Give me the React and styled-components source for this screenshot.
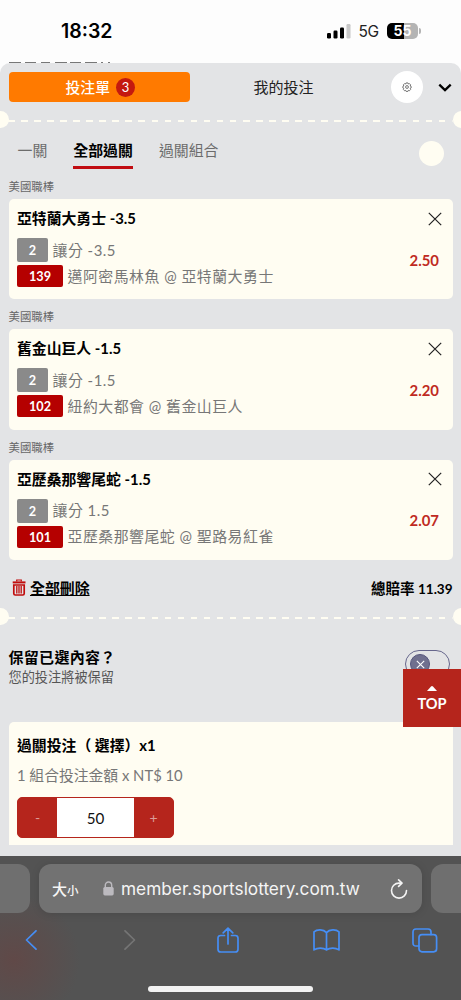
import React from 'react';
import styled, { createGlobalStyle } from 'styled-components';

const bets = [
    { id: 1, league: '美國職棒', pick: '亞特蘭大勇士 -3.5', handicap: '讓分 -3.5', code: '139', match: '邁阿密馬林魚 @ 亞特蘭大勇士', odds: '2.50' },
    { id: 2, league: '美國職棒', pick: '舊金山巨人 -1.5', handicap: '讓分 -1.5', code: '102', match: '紐約大都會 @ 舊金山巨人', odds: '2.20' },
    { id: 3, league: '美國職棒', pick: '亞歷桑那響尾蛇 -1.5', handicap: '讓分 1.5', code: '101', match: '亞歷桑那響尾蛇 @ 聖路易紅雀', odds: '2.07' },
];

const SignalIcon = () => (
    <svg width='24' height='15' viewBox='0 0 24 15'>
        <rect x='0' y='9' width='4' height='5.5' rx='1.2' fill='#000' />
        <rect x='6.5' y='6.5' width='4' height='8' rx='1.2' fill='#000' />
        <rect x='13' y='3.5' width='4' height='11' rx='1.2' fill='#000' />
        <rect x='19.5' y='0' width='4' height='14.5' rx='1.2' fill='#c8c8c8' />
    </svg>
);

const GearIcon = () => (
    <svg width='10' height='10' viewBox='0 0 24 24' fill='none' stroke='#444' strokeWidth='1.7' strokeLinejoin='round'>
        <path d='M9.8 2.2h4.4l1 2.6 2.6-1 3 3.2-1.2 2.6 2.4 1v3.6l-2.4 1 1.2 2.6-3 3.2-2.6-1-1 2.6H9.8l-1-2.6-2.6 1-3-3.2 1.2-2.6-2.4-1v-3.6l2.4-1L3.2 7l3-3.2 2.6 1z' />
        <circle cx='12' cy='12' r='3.4' />
    </svg>
);

const ChevronDownIcon = () => (
    <svg width='14' height='10' viewBox='0 0 14 10' fill='none' stroke='#000' strokeWidth='2.3'>
        <path d='M1.3 2.6L7 8.1l5.7-5.5' />
    </svg>
);

const CloseIcon = () => (
    <svg width='14' height='14' viewBox='0 0 14 14' fill='none' stroke='#222' strokeWidth='1.2'>
        <path d='M.8.8l12.4 12.4M13.2.8L.8 13.2' />
    </svg>
);

const TrashIcon = () => (
    <svg width='14' height='17' viewBox='0 0 14 17' fill='none' stroke='#c00d0d'>
        <path d='M4.7 2.6V1h4.6v1.6' strokeWidth='1.2' />
        <path d='M.7 3.4h12.8' strokeWidth='2' />
        <path d='M1.8 6v8.6q0 1.4 1.4 1.4h7.6q1.4 0 1.4-1.4V6z' strokeWidth='1.7' />
        <path d='M4.8 7v7.4M7 7v7.4M9.2 7v7.4' strokeWidth='1.3' />
    </svg>
);

const LockIcon = () => (
    <svg width='11' height='15' viewBox='0 0 11 15'>
        <path d='M2.3 7V4.2a3.2 3.2 0 0 1 6.4 0V7' fill='none' stroke='#bcbabf' strokeWidth='1.4' />
        <rect x='.3' y='6' width='10.4' height='8.4' rx='1.6' fill='#bcbabf' />
    </svg>
);

const ReloadIcon = () => (
    <svg width='18' height='20' viewBox='0 0 18 20' fill='none' stroke='#f4f4f4' strokeWidth='1.6' strokeLinecap='round' strokeLinejoin='round'>
        <path d='M11.4 4.1H9A7.5 7.5 0 1 0 16.5 11.6' />
        <path d='M8.6.9l3.4 3.2-3.4 3.3' />
    </svg>
);

const App = () => {
    return (
        <>
            <GlobalStyle />
            <Screen>
                <StatusBar>
                    <Time>18:32</Time>
                    <StatusRight>
                        <SignalIcon />
                        <Network>5G</Network>
                        <Battery>55</Battery>
                    </StatusRight>
                </StatusBar>
                <PageBehind>
                    <svg width='104' height='1' viewBox='0 0 104 1' stroke='#777' strokeWidth='1'>
                        <path d='M0 .5h12M16 .5h11M32 .5h9M46 .5h12M61 .5h11M76 .5h12M92 .5h2M99 .5h2' />
                    </svg>
                </PageBehind>
                <Slip>
                    <SlipHeader>
                        <SlipTab>
                            <TabLabel>投注單</TabLabel>
                            <Count>3</Count>
                        </SlipTab>
                        <MyBets>我的投注</MyBets>
                        <SettingButton>
                            <GearIcon />
                        </SettingButton>
                        <ChevronDownIcon />
                    </SlipHeader>
                    <TicketDivider />
                    <ModeTabs>
                        <ModeTab>一關</ModeTab>
                        <ModeTab $active>全部過關</ModeTab>
                        <ModeTab>過關組合</ModeTab>
                        <RoundButton />
                    </ModeTabs>
                    <BetList>
                        {bets.map((bet) => (
                            <BetGroup key={bet.id}>
                                <League>{bet.league}</League>
                                <BetCard>
                                    <BetInfo>
                                        <CardTitle>{bet.pick}</CardTitle>
                                        <BetRow $height={24}>
                                            <Tag $width={31} $color='#8a8a8a'>2</Tag>
                                            <BetText>{bet.handicap}</BetText>
                                        </BetRow>
                                        <BetRow $height={22}>
                                            <Tag $width={46} $color='#b50000'>{bet.code}</Tag>
                                            <BetText>{bet.match}</BetText>
                                        </BetRow>
                                    </BetInfo>
                                    <BetSide>
                                        <CloseIcon />
                                        <Odds>{bet.odds}</Odds>
                                    </BetSide>
                                </BetCard>
                            </BetGroup>
                        ))}
                    </BetList>
                    <Summary>
                        <TrashIcon />
                        <ClearAll>全部刪除</ClearAll>
                        <TotalOdds>
                            總賠率 <span>11.39</span>
                        </TotalOdds>
                    </Summary>
                    <TicketDivider />
                    <KeepSection>
                        <div>
                            <KeepTitle>保留已選內容？</KeepTitle>
                            <KeepText>您的投注將被保留</KeepText>
                        </div>
                        <Toggle>
                            <Knob>
                                <svg width='9' height='9' viewBox='0 0 9 9' stroke='#fff' strokeWidth='1.1'>
                                    <path d='M.8.8l7.4 7.4M8.2.8L.8 8.2' />
                                </svg>
                            </Knob>
                        </Toggle>
                    </KeepSection>
                    <StakeCard>
                        <CardTitle>
                            過關投注<Paren>（</Paren> 選擇<Paren>）</Paren>x1
                        </CardTitle>
                        <StakeText>1 組合投注金額 x NT$ 10</StakeText>
                        <Stepper>
                            <StepButton>-</StepButton>
                            <StepValue>50</StepValue>
                            <StepButton>+</StepButton>
                        </Stepper>
                    </StakeCard>
                    <TopButton>
                        <svg width='10' height='5' viewBox='0 0 10 5' fill='#fff'>
                            <path d='M0 5L4 .5Q5-.4 6 .5L10 5z' />
                        </svg>
                        TOP
                    </TopButton>
                </Slip>
                <Browser>
                    <AddressRow>
                        <SidePill $radius='0 12px 12px 0' />
                        <AddressBar>
                            <TextSize>
                                大<small>小</small>
                            </TextSize>
                            <LockIcon />
                            <Url>member.sportslottery.com.tw</Url>
                            <ReloadIcon />
                        </AddressBar>
                        <SidePill $radius='12px 0 0 12px' />
                    </AddressRow>
                    <Toolbar>
                        <svg width='12' height='20' viewBox='0 0 12 20' stroke='#468ef5'>
                            <path d='M11 .8L1.5 10l9.5 9.2' />
                        </svg>
                        <svg width='12' height='20' viewBox='0 0 12 20' stroke='#757575'>
                            <path d='M1 .8L10.5 10 1 19.2' />
                        </svg>
                        <svg width='22' height='26' viewBox='0 0 22 26' stroke='#468ef5'>
                            <path d='M7.5 8.5H3.8Q1 8.5 1 11.3v10.9Q1 25 3.8 25h14.4q2.8 0 2.8-2.8V11.3q0-2.8-2.8-2.8h-3.7M11 17V1.4M6.2 5.8L11 1.1l4.8 4.7' />
                        </svg>
                        <svg width='27' height='22' viewBox='0 0 27 22' stroke='#468ef5'>
                            <path d='M13.5 3.6C10.5.2 4 .2 1 2.8v18.1c3.3-2.4 9.3-2.4 12.5 0 3.2-2.4 9.2-2.4 12.5 0V2.8C23 .2 16.5.2 13.5 3.6zM13.5 3.6v17.3' />
                        </svg>
                        <svg width='26' height='25' viewBox='0 0 26 25' stroke='#468ef5'>
                            <path d='M6.8 18H4q-3 0-3-3V4q0-3 3-3h12q3 0 3 3v2.4' />
                            <rect x='7' y='6.6' width='17.6' height='17.2' rx='3' />
                        </svg>
                    </Toolbar>
                    <HomeIndicator />
                </Browser>
            </Screen>
        </>
    );
};

const GlobalStyle = createGlobalStyle`
    * {
        box-sizing: border-box;
    }
    body {
        margin: 0;
        background-color: #fdfdfd;
        font-family: Lato, 'Noto Sans CJK TC', sans-serif;
    }
    svg {
        display: block;
        flex-shrink: 0;
    }
`;

const Screen = styled.div`
    display: flex;
    flex-direction: column;
    width: 461px;
    height: 1000px;
    overflow: hidden;
    background-color: #fdfdfd;
`;

const StatusBar = styled.div`
    display: flex;
    justify-content: space-between;
    height: 62px;
    padding: 19px 43px 19px 61px;
    font-family: Inter, sans-serif;
`;

const Time = styled.div`
    font-size: 19.5px;
    font-weight: 600;
    line-height: 25px;
`;

const StatusRight = styled.div`
    display: flex;
    align-items: center;
    height: 24px;
`;

const Network = styled.div`
    width: 21px;
    margin: 1px 7.5px 0 8px;
    color: #222;
    font-size: 15.5px;
    letter-spacing: -0.3px;
`;

const Battery = styled.div`
    position: relative;
    width: 31px;
    height: 16px;
    border-radius: 5px;
    background: linear-gradient(to right, #000 17px, #b4b4b4 17px);
    color: #fff;
    font-size: 14px;
    font-weight: 700;
    line-height: 16px;
    text-align: center;
    &::after {
        content: '';
        position: absolute;
        top: 5px;
        right: -3px;
        width: 2px;
        height: 6px;
        border-radius: 0 2px 2px 0;
        background-color: #b4b4b4;
    }
`;

const PageBehind = styled.div`
    height: 1px;
    padding-left: 9px;
`;

const Slip = styled.div`
    position: relative;
    height: 793px;
    flex-shrink: 0;
    overflow: hidden;
    border-radius: 10px 10px 0 0;
    background-color: #e3e4e6;
`;

const SlipHeader = styled.div`
    display: flex;
    align-items: center;
    height: 48px;
    padding: 0 9.5px 0 8.5px;
`;

const SlipTab = styled.div`
    display: flex;
    align-items: center;
    justify-content: center;
    gap: 6px;
    width: 181.5px;
    height: 30px;
    padding-left: 2px;
    border-radius: 4px;
    background-color: #ff7a00;
    color: #fff;
`;

const TabLabel = styled.span`
    padding-bottom: 2px;
    font-size: 14.8px;
    font-weight: 500;
`;

const Count = styled.span`
    width: 19px;
    height: 19px;
    border-radius: 50%;
    background-color: #c4190f;
    font-size: 13px;
    line-height: 19px;
    text-align: center;
`;

const MyBets = styled.div`
    flex: 1;
    margin-right: 14px;
    padding-bottom: 2px;
    color: #222;
    font-size: 15px;
    text-align: center;
`;

const SettingButton = styled.div`
    display: flex;
    align-items: center;
    justify-content: center;
    width: 32px;
    height: 32px;
    margin-right: 14.5px;
    border-radius: 50%;
    background-color: #fff;
`;

const TicketDivider = styled.div`
    display: flex;
    align-items: center;
    justify-content: space-between;
    height: 17px;
    margin: 0 -8.5px;
    background: repeating-linear-gradient(to right, #fffdf2 0 6.6px, transparent 6.6px 13.05px) 16.8px 8.5px / 444.5px 2px no-repeat;
    &::before,
    &::after {
        content: '';
        width: 17px;
        height: 17px;
        border-radius: 50%;
        background-color: #fffdf2;
    }
`;

const ModeTabs = styled.div`
    display: flex;
    align-items: center;
    gap: 26px;
    height: 50px;
    padding: 0 17.5px;
`;

const ModeTab = styled.div`
    height: 33px;
    margin-top: -2px;
    border-bottom: 3px solid ${(props) => (props.$active ? '#c10d12' : 'transparent')};
    color: ${(props) => (props.$active ? '#000' : '#6c6c6c')};
    font-size: 14.9px;
    font-weight: ${(props) => (props.$active ? 700 : 400)};
    line-height: 29px;
`;

const RoundButton = styled.div`
    width: 25px;
    height: 25px;
    margin-left: auto;
    border-radius: 50%;
    background-color: #fffdf2;
`;

const BetList = styled.div`
    padding: 0 8.5px;
`;

const BetGroup = styled.div`
    height: 130.3px;
`;

const League = styled.div`
    height: 21px;
    color: #666;
    font-size: 11.4px;
    line-height: 18px;
`;

const BetCard = styled.div`
    display: flex;
    justify-content: space-between;
    height: 100.3px;
    padding: 6px 11px 0 8.5px;
    border-radius: 5px;
    background-color: #fffdf2;
`;

const BetInfo = styled.div`
    display: flex;
    flex-direction: column;
`;

const CardTitle = styled.div`
    height: 26px;
    margin-bottom: 7px;
    color: #000;
    font-size: 14.85px;
    font-weight: 700;
    line-height: 26px;
    white-space: nowrap;
`;

const BetRow = styled.div`
    display: flex;
    align-items: center;
    gap: 4.5px;
    height: ${(props) => props.$height}px;
    margin-bottom: 3px;
`;

const Tag = styled.div`
    display: flex;
    align-items: center;
    justify-content: center;
    width: ${(props) => props.$width}px;
    height: 100%;
    border-radius: 2px;
    background-color: ${(props) => props.$color};
    color: #fff;
    font-size: 12.7px;
    font-weight: 700;
`;

const BetText = styled.div`
    padding-bottom: 1px;
    color: #777;
    font-size: 14.9px;
    letter-spacing: 0.5px;
    line-height: 22px;
    white-space: nowrap;
`;

const BetSide = styled.div`
    display: flex;
    flex-direction: column;
    align-items: flex-end;
    padding-top: 6.5px;
`;

const Odds = styled.div`
    margin: 24px 2.5px 0 0;
    color: #bf2a22;
    font-size: 14.9px;
    font-weight: 700;
    line-height: 20px;
`;

const Summary = styled.div`
    display: flex;
    align-items: center;
    height: 40px;
    margin-top: -0.9px;
    padding: 0 8.5px 2px 12px;
    color: #000;
    font-size: 14.9px;
    font-weight: 700;
`;

const ClearAll = styled.div`
    margin-left: 4px;
    text-decoration: underline;
`;

const TotalOdds = styled.div`
    margin-left: auto;
    font-size: 14.5px;
    span {
        font-size: 13.5px;
    }
`;

const KeepSection = styled.div`
    display: flex;
    justify-content: space-between;
    height: 97px;
    padding: 21px 11px 0 8.5px;
`;

const KeepTitle = styled.div`
    color: #000;
    font-size: 15px;
    font-weight: 700;
    letter-spacing: 0.3px;
    line-height: 22px;
`;

const KeepText = styled.div`
    color: #555;
    font-size: 13.2px;
    line-height: 18px;
`;

const Toggle = styled.div`
    width: 45px;
    height: 28px;
    margin-top: 4px;
    padding: 3px 4px;
    border: 1px solid #66668c;
    border-radius: 14px;
`;

const Knob = styled.div`
    display: flex;
    align-items: center;
    justify-content: center;
    width: 20px;
    height: 20px;
    border: 1px solid #55557c;
    border-radius: 50%;
    background-color: #70708f;
`;

const StakeCard = styled.div`
    height: 122.5px;
    margin: 0 8.5px;
    padding: 9.5px 8.5px;
    border-radius: 5px 5px 0 0;
    background-color: #fffdf2;
`;

const Paren = styled.span`
    font-family: 'Noto Sans CJK JP', sans-serif;
`;

const StakeText = styled.div`
    height: 22px;
    margin-bottom: 10.5px;
    color: #777;
    font-size: 14.8px;
    line-height: 21px;
`;

const Stepper = styled.div`
    display: flex;
    width: 157px;
    height: 41px;
    overflow: hidden;
    border: 1px solid #b5251c;
    border-radius: 5px;
    background-color: #b5251c;
`;

const StepButton = styled.div`
    width: 39px;
    color: #dc9d98;
    font-size: 14px;
    line-height: 39px;
    text-align: center;
`;

const StepValue = styled.div`
    flex: 1;
    background-color: #fff;
    color: #111;
    font-size: 15.2px;
    line-height: 40px;
    text-align: center;
`;

const TopButton = styled.div`
    position: absolute;
    top: 606px;
    right: 0;
    display: flex;
    flex-direction: column;
    align-items: center;
    gap: 3px;
    width: 58px;
    height: 58px;
    padding-top: 17px;
    background-color: #b5251c;
    color: #fff;
    font-size: 14.6px;
    font-weight: 700;
    line-height: 20px;
`;

const Browser = styled.div`
    flex: 1;
    padding-top: 8px;
    background:
        radial-gradient(circle at 14px 104px, rgba(105, 66, 64, 0.6), rgba(105, 66, 64, 0) 66px),
        #535353;
`;

const AddressRow = styled.div`
    display: flex;
    justify-content: space-between;
    height: 49px;
`;

const SidePill = styled.div`
    width: 30px;
    border-radius: ${(props) => props.$radius};
    background-color: #6f6f6f;
`;

const AddressBar = styled.div`
    display: flex;
    align-items: center;
    width: 383px;
    padding: 0 14.5px 0 13px;
    border-radius: 12px;
    background-color: #727272;
    box-shadow: 0 1px 8px rgba(0, 0, 0, 0.12);
`;

const TextSize = styled.div`
    width: 51px;
    padding-bottom: 1px;
    color: #f5f5f5;
    font-size: 15px;
    font-weight: 500;
    white-space: nowrap;
    small {
        font-size: 11.5px;
    }
`;

const Url = styled.div`
    flex: 1;
    padding-left: 7px;
    color: #f5f5f5;
    font-family: Inter, sans-serif;
    font-size: 17.25px;
    white-space: nowrap;
`;

const Toolbar = styled.div`
    display: grid;
    grid-template-columns: repeat(5, 98.4px);
    align-items: center;
    justify-items: center;
    height: 54px;
    margin-left: -18px;
    svg {
        fill: none;
        stroke-width: 1.7;
        stroke-linecap: round;
        stroke-linejoin: round;
    }
`;

const HomeIndicator = styled.div`
    width: 165px;
    height: 5.5px;
    margin: 19px auto 0;
    border-radius: 3px;
    background-color: #f2f2f2;
`;

export default App;
